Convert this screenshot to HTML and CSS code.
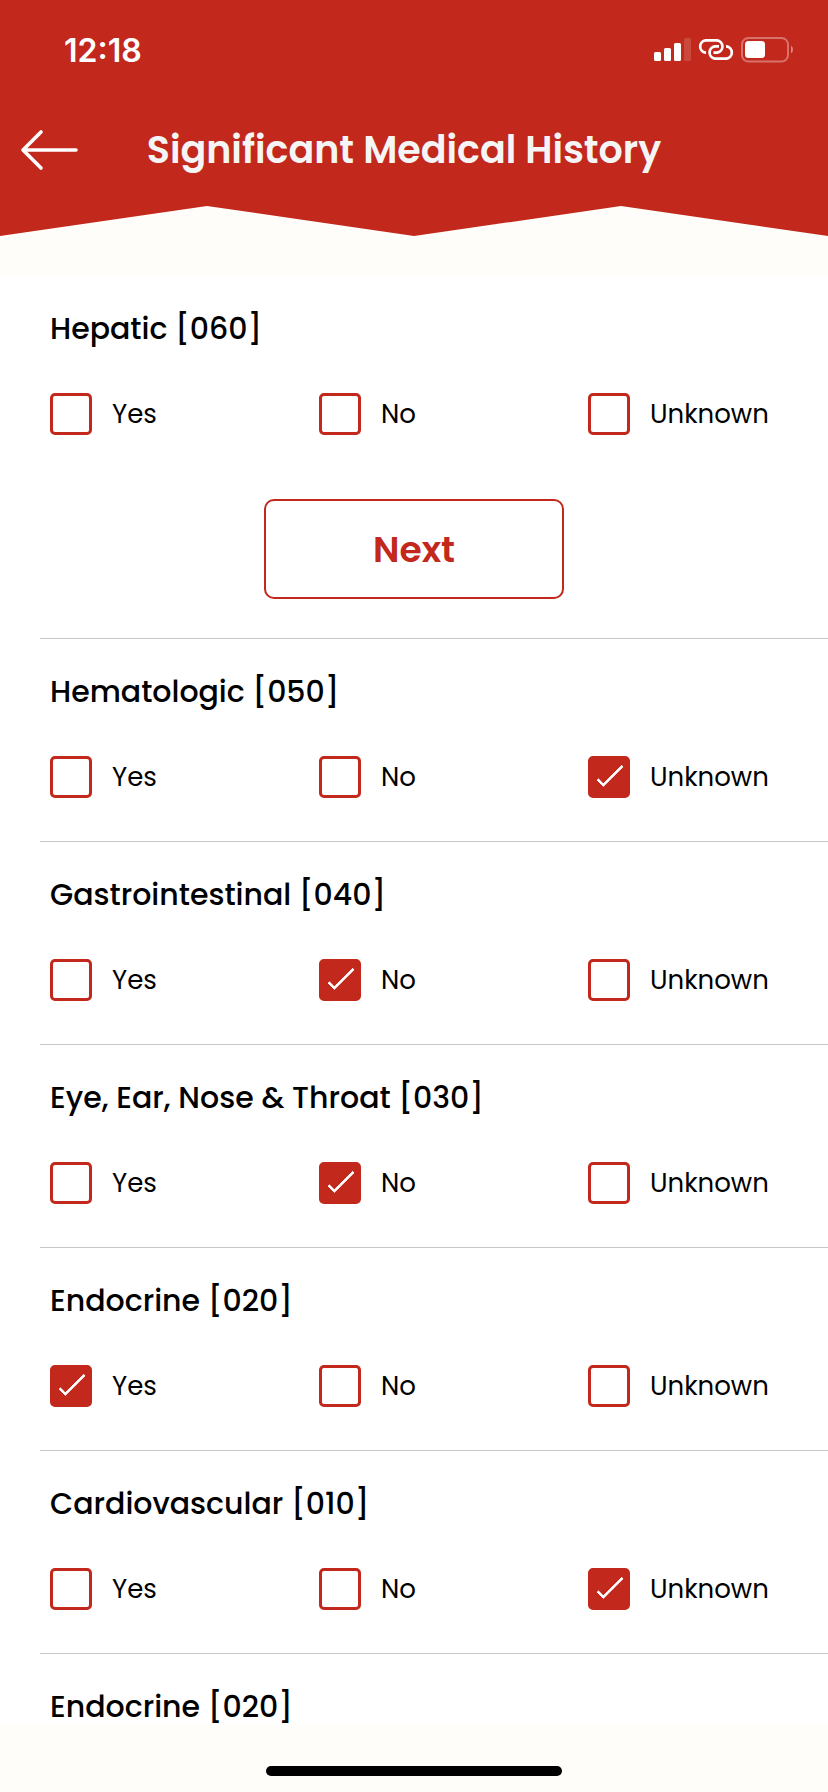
FILE: index.html
```html
<!DOCTYPE html>
<html lang="en">
<head>
    <meta charset="UTF-8">
    <meta name="viewport" content="width=device-width, initial-scale=1.0">
    <title>Significant Medical History</title>
    <link rel="stylesheet" href="styles.css">
</head>
<body>
    <header class="header">
        <div class="status-bar">
            <span class="time">12:18</span>
            <div class="status-icons">
                <svg width="37" height="26" viewBox="0 0 37 26" fill="#fff">
                    <rect x="0" y="15" width="7" height="9" rx="1.5"/>
                    <rect x="10" y="11" width="7" height="13" rx="1.5"/>
                    <rect x="20" y="6" width="7" height="18" rx="1.5"/>
                    <rect x="30" y="1" width="7" height="23" rx="1.5" opacity="0.15"/>
                </svg>
                <svg width="36" height="26" viewBox="0 0 36 26" fill="none" stroke="#fff" stroke-width="2.7">
                    <path d="M8 15.6H7.6A6.2 6.2 0 0 1 7.6 3.3H19a6.2 6.2 0 0 1 0 12.3H15.5"/>
                    <path d="M28 9.4H28.4A6.2 6.2 0 0 1 28.4 21.7H17a6.2 6.2 0 0 1 0-12.3H21"/>
                </svg>
                <svg width="53" height="26" viewBox="0 0 53 26">
                    <rect x="1" y="1" width="46" height="23.500" rx="6.500" fill="none" stroke="#fff" stroke-width="2" opacity="0.35"/>
                    <rect x="4" y="4" width="20" height="17" rx="3.500" fill="#fff"/>
                    <path d="M50 8.500a5 5 0 0 1 0 8z" fill="#fff" opacity="0.45"/>
                </svg>
            </div>
        </div>
        <div class="title-bar">
            <button class="back" type="button" aria-label="Back">
                <svg width="58" height="42" viewBox="0 0 58 42" fill="none" stroke="#fff" stroke-width="3.600" stroke-linecap="round" stroke-linejoin="round">
                    <path d="M56 21H3M21 3L3 21L21 39"/>
                </svg>
            </button>
            <h1>Significant Medical History</h1>
        </div>
    </header>

    <main class="questions">
        <section class="question">
            <h2>Hepatic [060]</h2>
            <div class="options">
                <label><input type="checkbox" name="hepatic" value="yes">Yes</label>
                <label><input type="checkbox" name="hepatic" value="no">No</label>
                <label><input type="checkbox" name="hepatic" value="unknown">Unknown</label>
            </div>
            <div class="actions">
                <button class="next" type="button">Next</button>
            </div>
        </section>
        <section class="question">
            <h2>Hematologic [050]</h2>
            <div class="options">
                <label><input type="checkbox" name="hematologic" value="yes">Yes</label>
                <label><input type="checkbox" name="hematologic" value="no">No</label>
                <label><input type="checkbox" name="hematologic" value="unknown" checked>Unknown</label>
            </div>
        </section>
        <section class="question">
            <h2>Gastrointestinal [040]</h2>
            <div class="options">
                <label><input type="checkbox" name="gastrointestinal" value="yes">Yes</label>
                <label><input type="checkbox" name="gastrointestinal" value="no" checked>No</label>
                <label><input type="checkbox" name="gastrointestinal" value="unknown">Unknown</label>
            </div>
        </section>
        <section class="question">
            <h2>Eye, Ear, Nose &amp; Throat [030]</h2>
            <div class="options">
                <label><input type="checkbox" name="eent" value="yes">Yes</label>
                <label><input type="checkbox" name="eent" value="no" checked>No</label>
                <label><input type="checkbox" name="eent" value="unknown">Unknown</label>
            </div>
        </section>
        <section class="question">
            <h2>Endocrine [020]</h2>
            <div class="options">
                <label><input type="checkbox" name="endocrine" value="yes" checked>Yes</label>
                <label><input type="checkbox" name="endocrine" value="no">No</label>
                <label><input type="checkbox" name="endocrine" value="unknown">Unknown</label>
            </div>
        </section>
        <section class="question">
            <h2>Cardiovascular [010]</h2>
            <div class="options">
                <label><input type="checkbox" name="cardiovascular" value="yes">Yes</label>
                <label><input type="checkbox" name="cardiovascular" value="no">No</label>
                <label><input type="checkbox" name="cardiovascular" value="unknown" checked>Unknown</label>
            </div>
        </section>
        <section class="question">
            <h2>Endocrine [020]</h2>
        </section>
    </main>

    <footer class="home-bar">
        <div class="home-indicator"></div>
    </footer>
</body>
</html>
```
FILE: styles.css
```css
*,
*::after {
    box-sizing: border-box;
}
body {
    font-family: Poppins, Inter, sans-serif;
    background: #fffdf9;
    color: #000;
    display: flex;
    flex-direction: column;
    min-height: 100vh;
    margin: 0;
}

/* red header with the zigzag bottom edge */
.header {
    flex: none;
    background: #c2281c;
    color: #f5f5f5;
    padding: 30px 0 53px;
    margin-bottom: 40px;
    clip-path: polygon(0 0, 100% 0, 100% 100%, 75% calc(100% - 30px), 50% 100%, 25% calc(100% - 30px), 0 100%);
}
.status-bar {
    display: flex;
    justify-content: space-between;
    align-items: center;
    height: 40px;
    padding: 0 34px 0 64px;
}
.time {
    color: #fff;
    font-family: Inter, sans-serif;
    font-size: 32px;
    font-weight: 600;
}
.status-icons {
    display: flex;
    gap: 7px;
}
.title-bar {
    display: flex;
    align-items: center;
    height: 66px;
    margin-top: 47px;
    padding: 0 98px 0 20px;
}
.back {
    display: flex;
    padding: 0;
    background: none;
    border: none;
    cursor: pointer;
}
h1 {
    flex: 1;
    margin: 0;
    font-size: 38px;
    font-weight: 600;
    line-height: 48px;
    text-align: center;
}

.questions {
    flex: 1;
    background: #fff;
    padding-left: 40px;
}
.question {
    padding: 36px 0 43px 10px;
    border-bottom: 1px solid #c6c6c8;
}
.question:last-child {
    padding-bottom: 0;
    border-bottom: none;
}
h2 {
    margin: 0;
    font-size: 30px;
    font-weight: 500;
    line-height: 34px;
}
.options {
    display: grid;
    grid-template-columns: repeat(3, 1fr);
    gap: 29px;
    margin-top: 47px;
}
.options label {
    display: flex;
    align-items: center;
    gap: 20px;
    height: 42px;
    font-size: 26px;
    cursor: pointer;
}
.options input {
    appearance: none;
    position: relative;
    width: 42px;
    height: 42px;
    margin: 0;
    border: 3px solid #c2281c;
    border-radius: 5px;
    background: #fff;
    cursor: pointer;
}
.options input:checked {
    background: #c2281c;
}
.options input:checked::after {
    content: "";
    position: absolute;
    left: 14px;
    top: 0;
    width: 10px;
    height: 29px;
    border: solid #fff;
    border-width: 0 3px 3px 0;
    border-radius: 1px;
    transform: rotate(45deg);
}
/* centred on the screen, not on the indented list */
.actions {
    display: flex;
    justify-content: center;
    margin: 64px 0 -4px -50px;
}
.next {
    width: 300px;
    height: 100px;
    background: #fff;
    color: #c2281c;
    border: 2px solid #c2281c;
    border-radius: 10px;
    font-family: inherit;
    font-size: 36px;
    font-weight: 600;
    cursor: pointer;
}

.home-bar {
    flex: none;
    display: flex;
    justify-content: center;
    align-items: flex-end;
    height: 68px;
    padding-bottom: 16px;
}
.home-indicator {
    width: 296px;
    height: 10px;
    border-radius: 5px;
    background: #000;
}
```
